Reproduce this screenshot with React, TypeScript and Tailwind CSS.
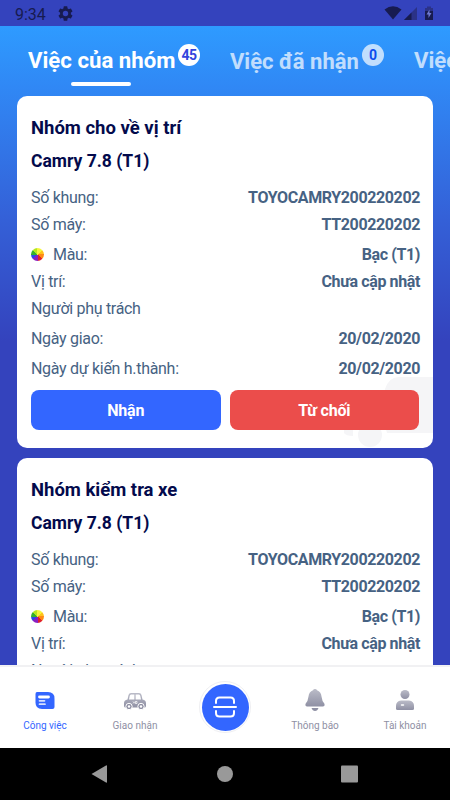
import React from "react";

function Row({ label, value, dot, gap }: { label: string; value?: string; dot?: boolean; gap?: boolean }) {
  return (
    <div className={`flex h-[27px] items-center justify-between text-[16px] text-[#466283] ${gap ? "mt-[3px]" : ""}`}>
      <span className="flex items-center tracking-[-0.3px] whitespace-nowrap">
        {dot && (
          <span className="mr-[9px] h-[13px] w-[13px] rounded-full bg-[conic-gradient(#f5f53a_0_45deg,#ffc21a_45deg_90deg,#ff8a14_90deg_135deg,#e0202c_135deg_180deg,#8a1fc0_180deg_225deg,#2a48e8_225deg_270deg,#35b02c_270deg_315deg,#b4e61e_315deg_360deg)]" />
        )}
        {label}
      </span>
      <span className="-mr-[1px] font-bold tracking-[-0.38px] whitespace-nowrap">{value}</span>
    </div>
  );
}

function Card({ group, children }: { group: string; children?: React.ReactNode }) {
  return (
    <section className="relative mb-[10px] h-[352px] shrink-0 overflow-hidden rounded-[10px] bg-white px-[14px] pt-[16px]">
      <svg className="absolute right-0 bottom-0" width="90" height="72" viewBox="0 0 90 72" fill="#f5f5f7">
        <path d="M42 13Q46 1 56 1H90V57H44L42 50H0V40H36Z" />
        <path d="M1 57q2 3 9 3v-8H1z" />
        <circle cx="27" cy="59" r="12" />
      </svg>
      <div className="relative">
        <h2 className="flex h-[33px] items-center text-[18.5px] font-bold text-[#030a4c]">{group}</h2>
        <h3 className="mb-[6px] flex h-[33px] items-center text-[17.5px] font-bold text-[#030a4c]">Camry 7.8 (T1)</h3>
        <Row label="Số khung:" value="TOYOCAMRY200220202" />
        <Row label="Số máy:" value="TT200220202" />
        <Row label="Màu:" value="Bạc (T1)" dot gap />
        <Row label="Vị trí:" value="Chưa cập nhật" />
        <Row label="Người phụ trách" />
        {children}
      </div>
    </section>
  );
}

function NavItem({ label, active, children }: { label: string; active?: boolean; children: React.ReactNode }) {
  return (
    <div className={`flex flex-1 flex-col items-center pt-[20px] text-[10px] ${active ? "text-[#3366ff]" : "text-[#8f90a4]"}`}>
      <div className="flex h-[26px] items-center">{children}</div>
      <span className="mt-[5px] leading-[16px] whitespace-nowrap">{label}</span>
    </div>
  );
}

export default function App() {
  return (
    <div className="flex h-[800px] w-[450px] flex-col overflow-hidden bg-[#3443bd] font-['Roboto','Noto_Sans',sans-serif]">
      <header className="flex h-[26px] shrink-0 items-center bg-[#3443bd] pl-[15px] text-[16px] text-[#171b50]">
        <span className="w-[43px] pt-[3px]">9:34</span>
        <svg width="15" height="15" viewBox="2 2 20 20" fill="currentColor">
          <path d="M19.14 12.94c.04-.3.06-.61.06-.94s-.02-.64-.07-.94l2.03-1.58a.49.49 0 0 0 .12-.61l-1.92-3.32a.49.49 0 0 0-.59-.22l-2.39.96c-.5-.38-1.03-.7-1.62-.94l-.36-2.54a.48.48 0 0 0-.48-.41h-3.84a.47.47 0 0 0-.47.41l-.36 2.54c-.59.24-1.13.57-1.62.94l-2.39-.96a.48.48 0 0 0-.59.22L2.74 8.87a.47.47 0 0 0 .12.61l2.03 1.58c-.05.3-.09.63-.09.94s.02.64.07.94l-2.03 1.58a.49.49 0 0 0-.12.61l1.92 3.32c.12.22.37.29.59.22l2.39-.96c.5.38 1.03.7 1.62.94l.36 2.54c.05.24.24.41.48.41h3.84c.24 0 .44-.17.47-.41l.36-2.54c.59-.24 1.13-.56 1.62-.94l2.39.96c.22.08.47 0 .59-.22l1.92-3.32a.47.47 0 0 0-.12-.61zM12 15.6a3.6 3.6 0 1 1 0-7.2 3.6 3.6 0 0 1 0 7.2z" />
        </svg>
        <svg className="ml-auto mr-[14px]" width="52" height="16" viewBox="0 0 52 16" fill="currentColor">
          <path d="M0.5 4.5Q9 -2 17.500 4.500L9 14.500Z" />
          <path d="M20 15L33 2V15Z" fill="#2b3287" />
          <path d="M20 15L27.500 7.500V15Z" />
          <path d="M41 3h2V1.500h4V3h2v4h-8z" fill="#2b3287" />
          <path d="M41 6h8v8.500q0 .5-.5.5h-7q-.5 0-.5-.5z" />
          <path d="M45.500 4.500L42.500 9.500H44.500V13L47.500 8H45.500Z" fill="#6e78d0" />
        </svg>
      </header>

      <main className="flex h-[639px] shrink-0 flex-col overflow-hidden bg-[linear-gradient(180deg,#2e9bff_0px,#3088f5_60px,#3461d8_190px,#3443bd_315px)]">
        <nav className="flex h-[70px] shrink-0 pl-[28px] text-[22.200px] font-bold text-white">
          <div className="flex w-[202px] shrink-0 flex-col">
            <div className="flex h-[56px] items-center pt-[2px]">
              <span className="w-[150px] pt-[12px] whitespace-nowrap">Việc của nhóm</span>
              <span className="flex h-[22px] w-[22px] items-center justify-center rounded-full bg-white text-[14px] tracking-[-0.5px] text-[#3344dd]">45</span>
            </div>
            <div className="ml-[43px] h-[3.500px] w-[60px] rounded-full bg-white" />
          </div>
          <div className="flex h-[56px] w-[184px] shrink-0 items-center pt-[2px] opacity-70">
            <span className="w-[132px] pt-[12px] text-[22px] whitespace-nowrap">Việc đã nhận</span>
            <span className="flex h-[22px] w-[22px] items-center justify-center rounded-full bg-white text-[14px] text-[#0030e8]">0</span>
          </div>
          <div className="flex h-[56px] shrink-0 items-center pt-[2px] opacity-70">
            <span className="pt-[12px] whitespace-nowrap">Việc</span>
          </div>
        </nav>
        <div className="flex flex-col px-[17px]">
          <Card group="Nhóm cho về vị trí">
            <Row label="Ngày giao:" value="20/02/2020" gap />
            <Row label="Ngày dự kiến h.thành:" value="20/02/2020" gap />
            <div className="mt-[8px] flex gap-[9px] text-[16px] font-bold tracking-[-0.2px] text-white">
              <button className="h-[39.500px] flex-1 rounded-[8px] bg-[#3366ff] pt-[2px]">Nhận</button>
              <button className="h-[39.500px] flex-1 rounded-[8px] bg-[#eb4d4b] pt-[2px]">Từ chối</button>
            </div>
          </Card>
          <Card group="Nhóm kiểm tra xe" />
        </div>
      </main>

      <footer className="flex h-[83px] shrink-0 border-t-2 border-[#f1f1f3] bg-white">
        <NavItem label="Công việc" active>
          <svg width="20" height="17" viewBox="0 0 20 17">
            <path d="M2 0H13Q19.500 0 19.500 6.500V15Q19.500 17 17.500 17H7Q0.500 17 .5 10.500V2Q.5 0 2 0Z" fill="#3366ff" />
            <path d="M4.500 5H13.500" stroke="#fff" strokeWidth="2.800" strokeLinecap="round" />
            <path d="M4.500 8.800H9.500M4.500 12.200H10" stroke="#d5e0ff" strokeWidth="1.700" strokeLinecap="round" />
          </svg>
        </NavItem>
        <NavItem label="Giao nhận">
          <svg className="mt-[2px]" width="22" height="17" viewBox="0 0 22 17">
            <defs>
              <linearGradient id="gray" x1="0" y1="0" x2="0" y2="1">
                <stop offset="0" stopColor="#bbbcc8" />
                <stop offset="1" stopColor="#8f90a4" />
              </linearGradient>
            </defs>
            <path fillRule="evenodd" fill="url(#gray)" d="M7 0H15Q17 0 17.500 2L18.500 6.500Q22 7 22 10V13Q22 14.500 20 14.500H2Q0 14.500 0 13V10Q0 7 3.500 6.500L4.500 2Q5 0 7 0ZM7 1.500Q6 1.500 5.700 3L5 6.500H10.400V1.500ZM11.600 1.500V6.500H17L16.300 3Q16 1.500 15 1.500Z" />
            <circle cx="5" cy="13.500" r="3.200" fill="#8f90a4" stroke="#fff" strokeWidth="1" />
            <circle cx="17" cy="13.500" r="3.200" fill="#8f90a4" stroke="#fff" strokeWidth="1" />
            <circle cx="5" cy="13.500" r="1.200" fill="#fff" />
            <circle cx="17" cy="13.500" r="1.200" fill="#fff" />
            <path d="M9 8.500L11 10.500M11 8.500L9 10.500M11.500 8.500H13V10.500H11.500Z" stroke="#fff" strokeWidth=".7" fill="none" />
          </svg>
        </NavItem>
        <div className="flex flex-1 justify-center pt-[14px]">
          <div className="flex h-[52px] w-[52px] items-center justify-center rounded-full border border-[#efeff2]">
            <div className="flex h-[47px] w-[47px] items-center justify-center rounded-full bg-[#3366ff]">
              <svg width="24" height="22" viewBox="0 0 24 22" fill="none" stroke="#fff" strokeWidth="2" strokeLinecap="round">
                <path d="M3 7V5Q3 1.500 6.500 1.500H17.500Q21 1.500 21 5V7M3 15V17Q3 20.500 6.500 20.500H17.500Q21 20.500 21 17V15M1 11H23" />
              </svg>
            </div>
          </div>
        </div>
        <NavItem label="Thông báo">
          <svg width="20" height="22" viewBox="0 0 20 22" fill="url(#gray)">
            <path d="M10 0Q11.500 0 12 1.200Q16 2.500 16.500 7.500Q17 12 19.300 14.500Q20.300 17.500 18 17.500H2Q-.3 17.500 .7 14.500Q3 12 3.500 7.500Q4 2.500 8 1.200Q8.500 0 10 0Z" />
            <path d="M6.500 19H13.500Q12.500 22 10 22T6.500 19Z" fill="#8f90a4" />
          </svg>
        </NavItem>
        <NavItem label="Tài khoản">
          <svg width="18" height="20" viewBox="0 0 18 20" fill="url(#gray)">
            <circle cx="9" cy="4.500" r="4.500" />
            <path d="M5 10.500H13Q18 11 18 16V18.500Q18 20 16.500 20H1.500Q0 20 0 18.500V16Q0 11 5 10.500Z" />
            <path d="M5.500 15H7.500" stroke="#fff" strokeWidth="1.500" strokeLinecap="round" />
          </svg>
        </NavItem>
      </footer>

      <div className="flex h-[52px] shrink-0 items-center bg-black pl-[91px]">
        <svg width="268" height="18" viewBox="0 0 268 18" fill="#999">
          <path d="M0.500 9L15 .5Q16 0 16 1V17Q16 18 15 17.500Z" />
          <circle cx="134" cy="9" r="8" />
          <rect x="250" y=".5" width="17" height="17" rx="1" />
        </svg>
      </div>
    </div>
  );
}
